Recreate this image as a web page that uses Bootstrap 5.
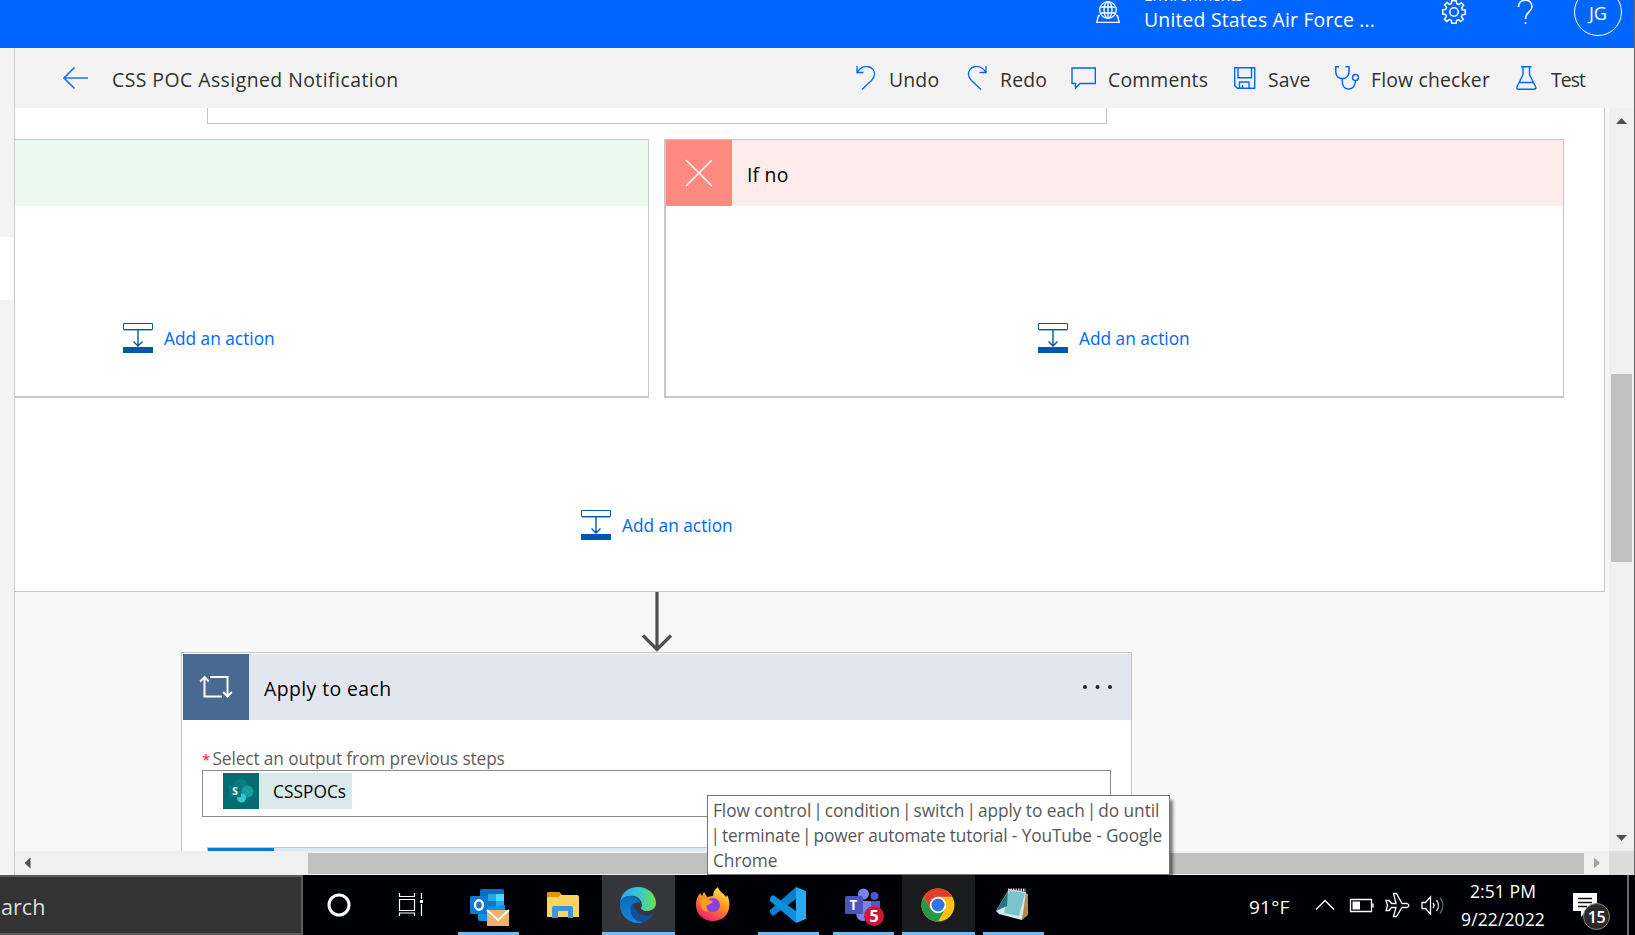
<!DOCTYPE html>
<html lang="en">
<head>
<meta charset="utf-8">
<meta name="viewport" content="width=device-width, initial-scale=1">
<title>CSS POC Assigned Notification</title>
<link href="https://cdn.jsdelivr.net/npm/bootstrap@5.3.0/dist/css/bootstrap.min.css" rel="stylesheet">
<style>
body{font-family:"Open Sans","Noto Sans",sans-serif;width:1635px;height:935px;overflow:hidden;background:#f3f3f3;color:#323130;font-size:17.3px;line-height:24px}
svg{display:block;flex:none}
.t20{font-size:19.4px;line-height:28px;white-space:nowrap}
.t18{font-size:17.3px;line-height:24px;white-space:nowrap}
.window{width:1635px;height:875px;border-right:1px solid #6b6b6b}
.suite{height:48px;background:#06f;color:#fff}
.suite .globe{margin:0 24px 0 1096px}
.env{width:310px;margin-top:-15px}
.env small{font-size:15.5px;line-height:20px;display:block;height:21px;letter-spacing:-.15px}
.env .t20{letter-spacing:.18px}
.suite .gear{margin:-1px 50px 0 0}
.avatar{width:48px;height:48px;margin:-12px 12px 0 39px;border:1px solid #fff;font-size:18.2px}
.avatar span{padding-top:2px}
.siderail{width:14px;background:#f3f3f3}
.siderail div{margin-top:189px;height:63px;width:13px;background:#fff;border-radius:0 3px 3px 0}
.workspace{border-left:1px solid #ccc}
.toolbar{height:60px;background:#f3f3f3}
.toolbar .t20{padding-top:3px}
.toolbar .back{margin:0 24px 0 48px}
.toolbar .flowname{width:744px;letter-spacing:.46px}
.tool{color:#323130;background:none;border:0;padding:0;text-align:left;letter-spacing:.17px}
.w1{width:111px}.w2{width:104px}.w3{width:163px}.w4{width:101px}.w5{width:181px}
.w1 svg,.w2 svg{margin-right:9px}.w3 svg{margin-right:12px}.w4 svg{margin-right:10px}.w5 svg{margin-right:12px}.w6 svg{margin-right:11px}
.w6{letter-spacing:-.9px}
.canvas{height:743px;background:#f8f8f8}
.scope{width:1590px;height:484px;background:#fff;border:solid #c8c6c4;border-width:0 1px 1px 0}
.cond{margin-left:192px;width:900px;height:16px;border:1px solid #c4c4c4;border-top:0}
.branches{margin-top:15px;gap:15px}
.branch{height:259px;border:1px solid #c8c8c8;border-bottom-width:2px;background:#fff}
.branch.yes{width:634px;border-left:0}
.branch.no{width:900px;border-left-width:2px}
.branch header{height:66px}
.yes header{background:#ecfaed}.no header{background:#ffedeb;color:#000}
.tile{width:66px;height:66px}
.no .tile{background:#ff8a80}
.no .t20{margin-left:15px;padding-top:3px;letter-spacing:.2px}
.addaction{color:#06f;gap:11px;text-decoration:none}
.addaction .t18{padding-top:2px}
.yes .addaction{margin:117px 0 0 108px}
.no .addaction{margin:117px 0 0 372px}
.scope>.addaction{margin:112px 0 0 566px}
.downarrow{margin-left:626px}
.loop{width:951px;height:200px;margin-left:166px;border:1px solid #c8c6c4;background:#fff;padding:1px 0 0 1px}
.loop header{background:#e2e7ef;color:#000}
.loop .tile{background:#486991}
.loop header .t20{margin-left:15px;padding-top:3px;flex:1;letter-spacing:.42px}
.loop header .dots{margin-right:19px;margin-top:-1px}
.fieldname{color:#605e5c;margin:27px 0 -1px 19px;letter-spacing:-.12px}
.fieldname b{color:#e81123;font-weight:400;width:10.5px;font-size:15px}
.field{height:47px;width:909px;margin-left:19px;border:1px solid #8a8a8a;padding:2px 0 0 20px}
.token{width:129px;height:36px;background:#d9e8e8;color:#000}
.token .t18{margin-left:14px;padding-top:1px;letter-spacing:.05px}
.nested{margin:30px 0 0 24px;width:900px;height:80px;border:1px solid #c4c4c4;background:#d9e9f7}
.nested div{width:66px;height:66px;background:#0078d7}
.vbar{width:25px;height:743px;background:#f0f0f0}
.vbar div{width:21px;height:188px;background:#c0c0c0}
.hbar{height:24px;background:#f0f0f0}
.hbar .thumb{height:21px;width:1276px;background:#c0c0c0}
.hbar .corner{width:25px;height:24px;background:#dcdcdc}
.tip{left:707px;top:795px;width:463px;height:80px;border:1px solid #767676;background:#fff;color:#575757;box-shadow:4px 4px 3px -1px rgba(0,0,0,.5);padding:2px 0 0 5px;line-height:25px;letter-spacing:-.05px;white-space:nowrap;clip-path:inset(0 -8px 0 0);z-index:3}
.tip i{font-style:normal;margin:0 -2.4px}
.tip .second{letter-spacing:-.13px}
.taskbar{height:60px;background:#000106;color:#fff;position:relative;z-index:2}
.searchbox{width:303px;height:60px;background:#333;border:2px solid #5c5c5c;border-left:0;font-size:21.6px;color:#dedede;padding:4px 0 0 1px}
.app{height:60px;width:61px;border-bottom:3px solid #76b9ed;margin-right:14px;flex:none}
.app.on{width:73px;background:#35363b;margin:0 8px 0 -6px}
.app.dim{background:#1a1b1f}
.app.off{border-color:transparent}
.temp{margin:18px 0 0 191px;width:60px;font-size:19px;line-height:28px;letter-spacing:.2px}
.tray{margin-left:-9px}
.clock{font-size:17.5px;line-height:28px;width:98px;margin:2px 0 0 4px;letter-spacing:.1px}
.notif{width:40px;height:40px;margin:18px 0 0 21px}
.notif span{left:10px;top:10px;width:27px;height:27px;border:1px solid #8a8a8a;background:#2b2b2b;font-size:16px;font-weight:600;letter-spacing:-.5px}
.peek{width:2px;height:60px;background:#6b6b6b;margin-left:14px;flex:none}
</style>
</head>
<body>
<svg width="0" height="0" class="position-absolute">
 <symbol id="add" viewBox="0 0 30 30"><path d="M1 .5H29.500V6.500H.5V.5Z" fill="none" stroke="#0058ad"/><path d="M1 7.500H29" stroke="#8db8e0"/><path d="M15 7V23M10.500 18.500 15 23l4.500-4.500" fill="none" stroke="#0058ad" stroke-width="1.400"/><path d="M0 24H30V30H0Z" fill="#0058ad"/></symbol>
</svg>
<div class="window d-flex flex-column overflow-hidden">
 <div class="suite d-flex overflow-hidden">
  <svg class="globe" width="24" height="24" fill="none" stroke="#fff" stroke-width="1.300"><circle cx="12" cy="10" r="8.300"/><ellipse cx="12" cy="10" rx="4" ry="8.300"/><path d="M12 2V18M4.500 7H19.500M4.500 13H19.500M4 15.500H2.500L.8 22.300H23.200L21.500 15.500H20"/></svg>
  <div class="env"><small>Environments</small><div class="t20">United States Air Force ...</div></div>
  <svg class="gear ms-auto" width="26" height="26" viewBox="-13 -14 26 26" fill="none" stroke="#fff" stroke-width="1.500"><path d="M-2.200-11.300H2.200L2.800-8.200 4.800-7.300 7.400-9.200 9.600-6.800 7.600-4.200 8.400-2.300 11.300-2V2.200L8.300 2.700 7.400 4.800 9.300 7.400 6.700 9.500 4.600 7.700 2.600 8.500 2.100 11.300H-2.200L-2.700 8.400-4.700 7.600-7.300 9.400-9.500 7.100-7.600 4.600-8.400 2.500-11.300 2.100V-2.200L-8.300-2.600-7.500-4.600-9.300-7.200-6.900-9.400-4.600-7.600-2.700-8.300Z" transform="translate(0 -1)"/><circle cy="-1" r="4.200"/></svg>
  <svg width="18" height="26" fill="none" stroke="#fff" stroke-width="1.600"><path d="M1.500 7C1.500-2 15-2 15 6.500 15 12 8.500 12 8.500 19"/><circle cx="8.500" cy="23" r="1" fill="#fff" stroke="none"/></svg>
  <div class="avatar rounded-circle d-flex align-items-center justify-content-center flex-shrink-0"><span>JG</span></div>
 </div>
 <div class="d-flex flex-fill">
  <div class="siderail"><div></div></div>
  <div class="workspace flex-fill">
   <div class="toolbar d-flex align-items-center">
    <svg class="back" width="25" height="24" fill="none" stroke="#2b6bff" stroke-width="1.700"><path d="M25 12H1.500M11.500 1.500 1 12 11.500 22.500"/></svg>
    <div class="flowname t20">CSS POC Assigned Notification</div>
    <button class="tool w1 d-flex align-items-center"><svg width="24" height="24" fill="none" stroke="#06f" stroke-width="1.300"><path d="M1 0V6.500H7.500M1 6.500C8-4 19 1 18.500 8.500 18.300 12 17 13 15 15L6 23.500"/></svg><span class="t20">Undo</span></button>
    <button class="tool w2 d-flex align-items-center"><svg width="24" height="24" fill="none" stroke="#06f" stroke-width="1.300"><path d="M19 0V6.500H12.500M19 6.500C12-4 1 1 1.500 8.500 1.700 12 3 13 5 15L14 23.500"/></svg><span class="t20">Redo</span></button>
    <button class="tool w3 d-flex align-items-center"><svg width="25" height="24" fill="none" stroke="#06f" stroke-width="1.400"><path d="M1 2H24.300V17.500H9L4.500 22V17.500H1Z"/></svg><span class="t20">Comments</span></button>
    <button class="tool w4 d-flex align-items-center"><svg width="24" height="24" fill="none" stroke="#06f" stroke-width="1.400"><path d="M.7 1.700H20.700V22.300H3.500L.7 19.800ZM4 2V11.700H17.500V2M5.500 22V16H15V22M8.500 22V19"/></svg><span class="t20">Save</span></button>
    <button class="tool w5 d-flex align-items-center"><svg width="24" height="24" fill="none" stroke="#06f" stroke-width="1.500"><path d="M4 .8H.8V6C.8 15 14 15 14 6V.8H10.500M7.300 12.500V16C7.300 26 20.500 25 20.500 15"/><circle cx="20.500" cy="11.500" r="3"/></svg><span class="t20">Flow checker</span></button>
    <button class="tool w6 d-flex align-items-center"><svg width="24" height="24" fill="none" stroke="#06f" stroke-width="1.400"><path d="M5 .8H15.500M7 1V8.500L1.200 20.500C.3 22.500 1 23.200 2.500 23.200H18C19.800 23.200 20.300 22 19.500 20.500L13.500 8.500V1M4 16.500H17"/></svg><span class="t20">Test</span></button>
   </div>
   <div class="d-flex">
    <div class="canvas flex-fill overflow-hidden">
     <div class="scope">
      <div class="cond"></div>
      <div class="branches d-flex">
       <div class="branch yes"><header></header><a class="addaction d-flex align-items-center"><svg width="30" height="30"><use href="#add"/></svg><span class="t18">Add an action</span></a></div>
       <div class="branch no"><header class="d-flex align-items-center"><div class="tile d-flex align-items-center justify-content-center"><svg width="28" height="28" stroke="#fff" stroke-width="1.500"><path d="M1 1 27 27M27 1 1 27"/></svg></div><span class="t20">If no</span></header><a class="addaction d-flex align-items-center"><svg width="30" height="30"><use href="#add"/></svg><span class="t18">Add an action</span></a></div>
      </div>
      <a class="addaction d-flex align-items-center"><svg width="30" height="30"><use href="#add"/></svg><span class="t18">Add an action</span></a>
     </div>
     <svg class="downarrow" width="32" height="60" fill="none" stroke="#4f4f4f" stroke-width="3.200"><path d="M16 0V58M2 43.500 16 57.500 30 43.500"/></svg>
     <div class="loop">
      <header class="d-flex align-items-center"><div class="tile d-flex align-items-center justify-content-center"><svg width="34" height="24" fill="none" stroke="#fff" stroke-width="2"><path d="M5.500 2V21.500H23M1.200 6.500 5.500 2 9.800 6.500M11 2H28.500V21M24.200 17 28.500 21.500 32.800 17"/></svg></div><span class="t20">Apply to each</span><svg class="dots" width="30" height="6" fill="#222"><circle cx="3" cy="3" r="2"/><circle cx="15.500" cy="3" r="2"/><circle cx="28" cy="3" r="2"/></svg></header>
      <div class="fieldname t18 d-flex"><b>*</b>Select an output from previous steps</div>
      <div class="field"><div class="token d-flex align-items-center"><svg width="36" height="36"><path d="M0 0H36V36H0Z" fill="#036c70"/><circle cx="18" cy="13" r="7" fill="#038387" opacity=".75"/><circle cx="24.500" cy="18.500" r="6" fill="#1a9ba1"/><circle cx="18.500" cy="25" r="4.500" fill="#37c6d0"/><path d="M6 12H18V24H6Z" fill="#03787c"/><text x="9.200" y="22" font-size="10" font-weight="700" fill="#fff">S</text></svg><span class="t18">CSSPOCs</span></div></div>
      <div class="nested"><div></div></div>
     </div>
    </div>
    <div class="vbar d-flex flex-column align-items-center"><svg width="25" height="266"><path d="M7 16 12.500 10 18 16Z" fill="#505050"/></svg><div></div><svg class="mt-auto" width="25" height="24"><path d="M7 8H18L12.500 14Z" fill="#505050"/></svg></div>
   </div>
   <div class="hbar d-flex align-items-center"><svg width="293" height="24"><path d="M15.500 6.500V17.500L9.500 12Z" fill="#505050"/></svg><div class="thumb"></div><svg width="25" height="24"><path d="M10 6.500V17.500L16 12Z" fill="#a3a3a3"/></svg><div class="corner"></div></div>
  </div>
 </div>
</div>
<div class="tip position-absolute">Flow control <i>|</i> condition <i>|</i> switch <i>|</i> apply to each <i>|</i> do until<br><span class="second"><i>|</i> terminate <i>|</i> power automate tutorial - YouTube - Google</span><br>Chrome</div>
<div class="taskbar d-flex">
 <div class="searchbox d-flex align-items-center">arch</div>
 <div class="d-flex align-items-center"><svg width="155" height="60" fill="none" stroke="#fff"><circle cx="36" cy="30" r="10" stroke-width="3"/><path d="M96.500 18V21.500H111.500V18M96.500 24.500H111.500V35.500H96.500ZM96.500 41V38H111.500V41M118.500 18V24M118.500 29V41" stroke-width="1.200"/><path d="M117 25H120V28H117Z" fill="#fff" stroke="none"/></svg></div>
 <div class="app"><svg width="61" height="57"><rect x="22" y="14" width="24" height="26" rx="1.500" fill="#0a6cbd"/><path d="M30 19H38V26H30Z" fill="#28a8ea"/><path d="M38 19H46V26H38Z" fill="#50d9ff"/><path d="M30 26H38V33H30Z" fill="#0a78c8"/><path d="M38 26H46V33H38Z" fill="#28a8ea"/><path d="M20 33 47 30V46H22Q20 46 20 44Z" fill="#1490df"/><rect x="12" y="21" width="18" height="18" rx="1.500" fill="#0f78d4"/><ellipse cx="21" cy="30" rx="4" ry="4.700" fill="none" stroke="#fff" stroke-width="2.400"/><path d="M29 35H51V51H29Z" fill="#ebb36e"/><path d="M29 35 40 45 51 35" fill="none" stroke="#fff" stroke-width="1.700"/></svg></div>
 <div class="app off"><svg width="61" height="57"><path d="M14 19Q14 17 16 17H26L29 20H44Q46 20 46 22V42H14Z" fill="#ffd35f"/><path d="M14 19Q14 17 16 17H26L28 19 26 22H14Z" fill="#dc9a00"/><path d="M19 43V33Q19 31 21 31H38Q40 31 40 33V43H35V36H25V43Z" fill="#3b97dc"/></svg></div>
 <div class="app on"><svg width="73" height="57"><defs><linearGradient id="e1"><stop offset="0" stop-color="#2ba8ee"/><stop offset=".5" stop-color="#35c5d8"/><stop offset="1" stop-color="#6be04d"/></linearGradient><linearGradient id="e2" x2="0" y2="1"><stop stop-color="#0c69b4"/><stop offset="1" stop-color="#1586dc"/></linearGradient></defs><path d="M18 28C19 17 27 12 36 12 47 12 54 20 54 28 54 34 49 36 45 36 41 36 39 34 39 33 41 31 40 25 35 22 29 19 21 22 18 28Z" fill="url(#e1)"/><path d="M18 30C18 23 24 20 30 21 35 22 38 25 38 28 34 25 28 31 30 38 32 45 38 47 43 46 40 48 38 48 36 48 26 48 18 40 18 30Z" fill="url(#e2)"/><path d="M32 27C25 33 29 47 41 47 46 46 50 42 52 38 44 43 31 40 32 27Z" fill="#114e9c"/></svg></div>
 <div class="app off"><svg width="61" height="57"><defs><linearGradient id="f1" x1=".8" x2=".3" y2="1"><stop stop-color="#fff04a"/><stop offset=".5" stop-color="#ff8a22"/><stop offset="1" stop-color="#f4157a"/></linearGradient></defs><path d="M13 30C13 24 15 21 17 18L19 21 21 17 24 22 30 21C30 17 32 14 35 12 36 17 41 18 43 22L44 20C50 31 45 46 30 46 20 46 13 39 13 30Z" fill="url(#f1)"/><circle cx="30" cy="30" r="7" fill="#8a44de"/><path d="M17 25Q21 22 26 25L30 26Q29 29 24 30 22 34 26 37 16 36 17 25Z" fill="#ff9b20"/></svg></div>
 <div class="app"><svg width="61" height="57"><path d="M38 12V24L15 41 12 38V35Z" fill="#0a7fcf"/><path d="M38 48V36L15 20 12 23V26Z" fill="#0b8fdd"/><path d="M38 12 48 16V44L38 48Z" fill="#27aaf2"/></svg></div>
 <div class="app"><svg width="61" height="57"><circle cx="30.500" cy="19" r="5.500" fill="#7b83eb"/><circle cx="41.500" cy="21" r="4" fill="#5059c9"/><path d="M35 26H47V36Q46 42 39 42Z" fill="#5059c9"/><path d="M22 26H38V38Q37 46 30 46 24 46 23 38Z" fill="#7b83eb"/><rect x="12" y="21" width="18" height="18" rx="1.500" fill="#4b53bc"/><text x="16.500" y="34.800" font-size="13.500" font-weight="700" fill="#fff">T</text><circle cx="41" cy="41" r="10" fill="#d0173a"/><text x="36.400" y="47" font-size="16" font-weight="700" fill="#fff">5</text></svg></div>
 <div class="app on dim"><svg width="73" height="57"><circle cx="36" cy="30" r="16.500" fill="#fbc116"/><path d="M21.700 21.800A16.500 16.500 0 0 1 50.300 21.800H36L28.900 34Z" fill="#e33b2e"/><path d="M21.700 21.800 28.900 34.200 36 38.200 43.100 34.200 36 46.500A16.500 16.500 0 0 1 21.700 21.800Z" fill="#269947"/><circle cx="36" cy="30" r="8.200" fill="#fff"/><circle cx="36" cy="30" r="6.500" fill="#2d74e8"/></svg></div>
 <div class="app"><svg width="61" height="57"><path d="M41 17 45 19V40L39 45Z" fill="#b58b45"/><path d="M26 14 43 17 39 45 16 39 13 36Z" fill="#cfe9ee"/><path d="M26 15 42 18 36 41 21 38Z" fill="#7cc3d0"/><path d="M25 16 13 36 24 31Z" fill="#26737f"/><path d="M25 15H43" stroke="#ccc" stroke-width="3" stroke-dasharray="1.500 1"/></svg></div>
 <div class="temp">91°F</div>
 <svg class="tray" width="150" height="60" fill="none" stroke="#fff" stroke-width="1.300"><path d="M16 34.500 25 25.500 34 34.500"/><path d="M50.500 24.500H71.500V36.500H50.500ZM73 28.500V32.500"/><path d="M52.500 26.500H60V34.500H52.500Z" fill="#fff" stroke="none"/><path d="M86 25.500H89L91.500 28.500H96L93.500 18.500H96.500L102 28.500H107C109.500 29.500 109.500 31.500 107 32.500H102L96.500 41.500H93.500L96 32.500H91.500L89 35.500H86L87.500 30.500Z"/><path d="M122 27.500H125.500L130.500 22V39L125.500 33.500H122ZM133 28Q135 30.500 133 33"/><path d="M136.500 25Q140.500 30.500 136.500 36" opacity=".85"/><path d="M140 22.500Q146 30.500 140 38.500" opacity=".4"/></svg>
 <div class="clock text-center">2:51 PM<br>9/22/2022</div>
 <div class="notif position-relative"><svg width="30" height="30"><path d="M0 0H24V18H13L8 24V18H0Z" fill="#fff"/><path d="M5 5.500H19M5 9.500H19M5 13.500H14" stroke="#111" stroke-width="1.300"/></svg><span class="position-absolute rounded-circle d-flex align-items-center justify-content-center">15</span></div>
 <div class="peek"></div>
</div>
<script src="https://cdn.jsdelivr.net/npm/bootstrap@5.3.0/dist/js/bootstrap.bundle.min.js"></script>
</body>
</html>
